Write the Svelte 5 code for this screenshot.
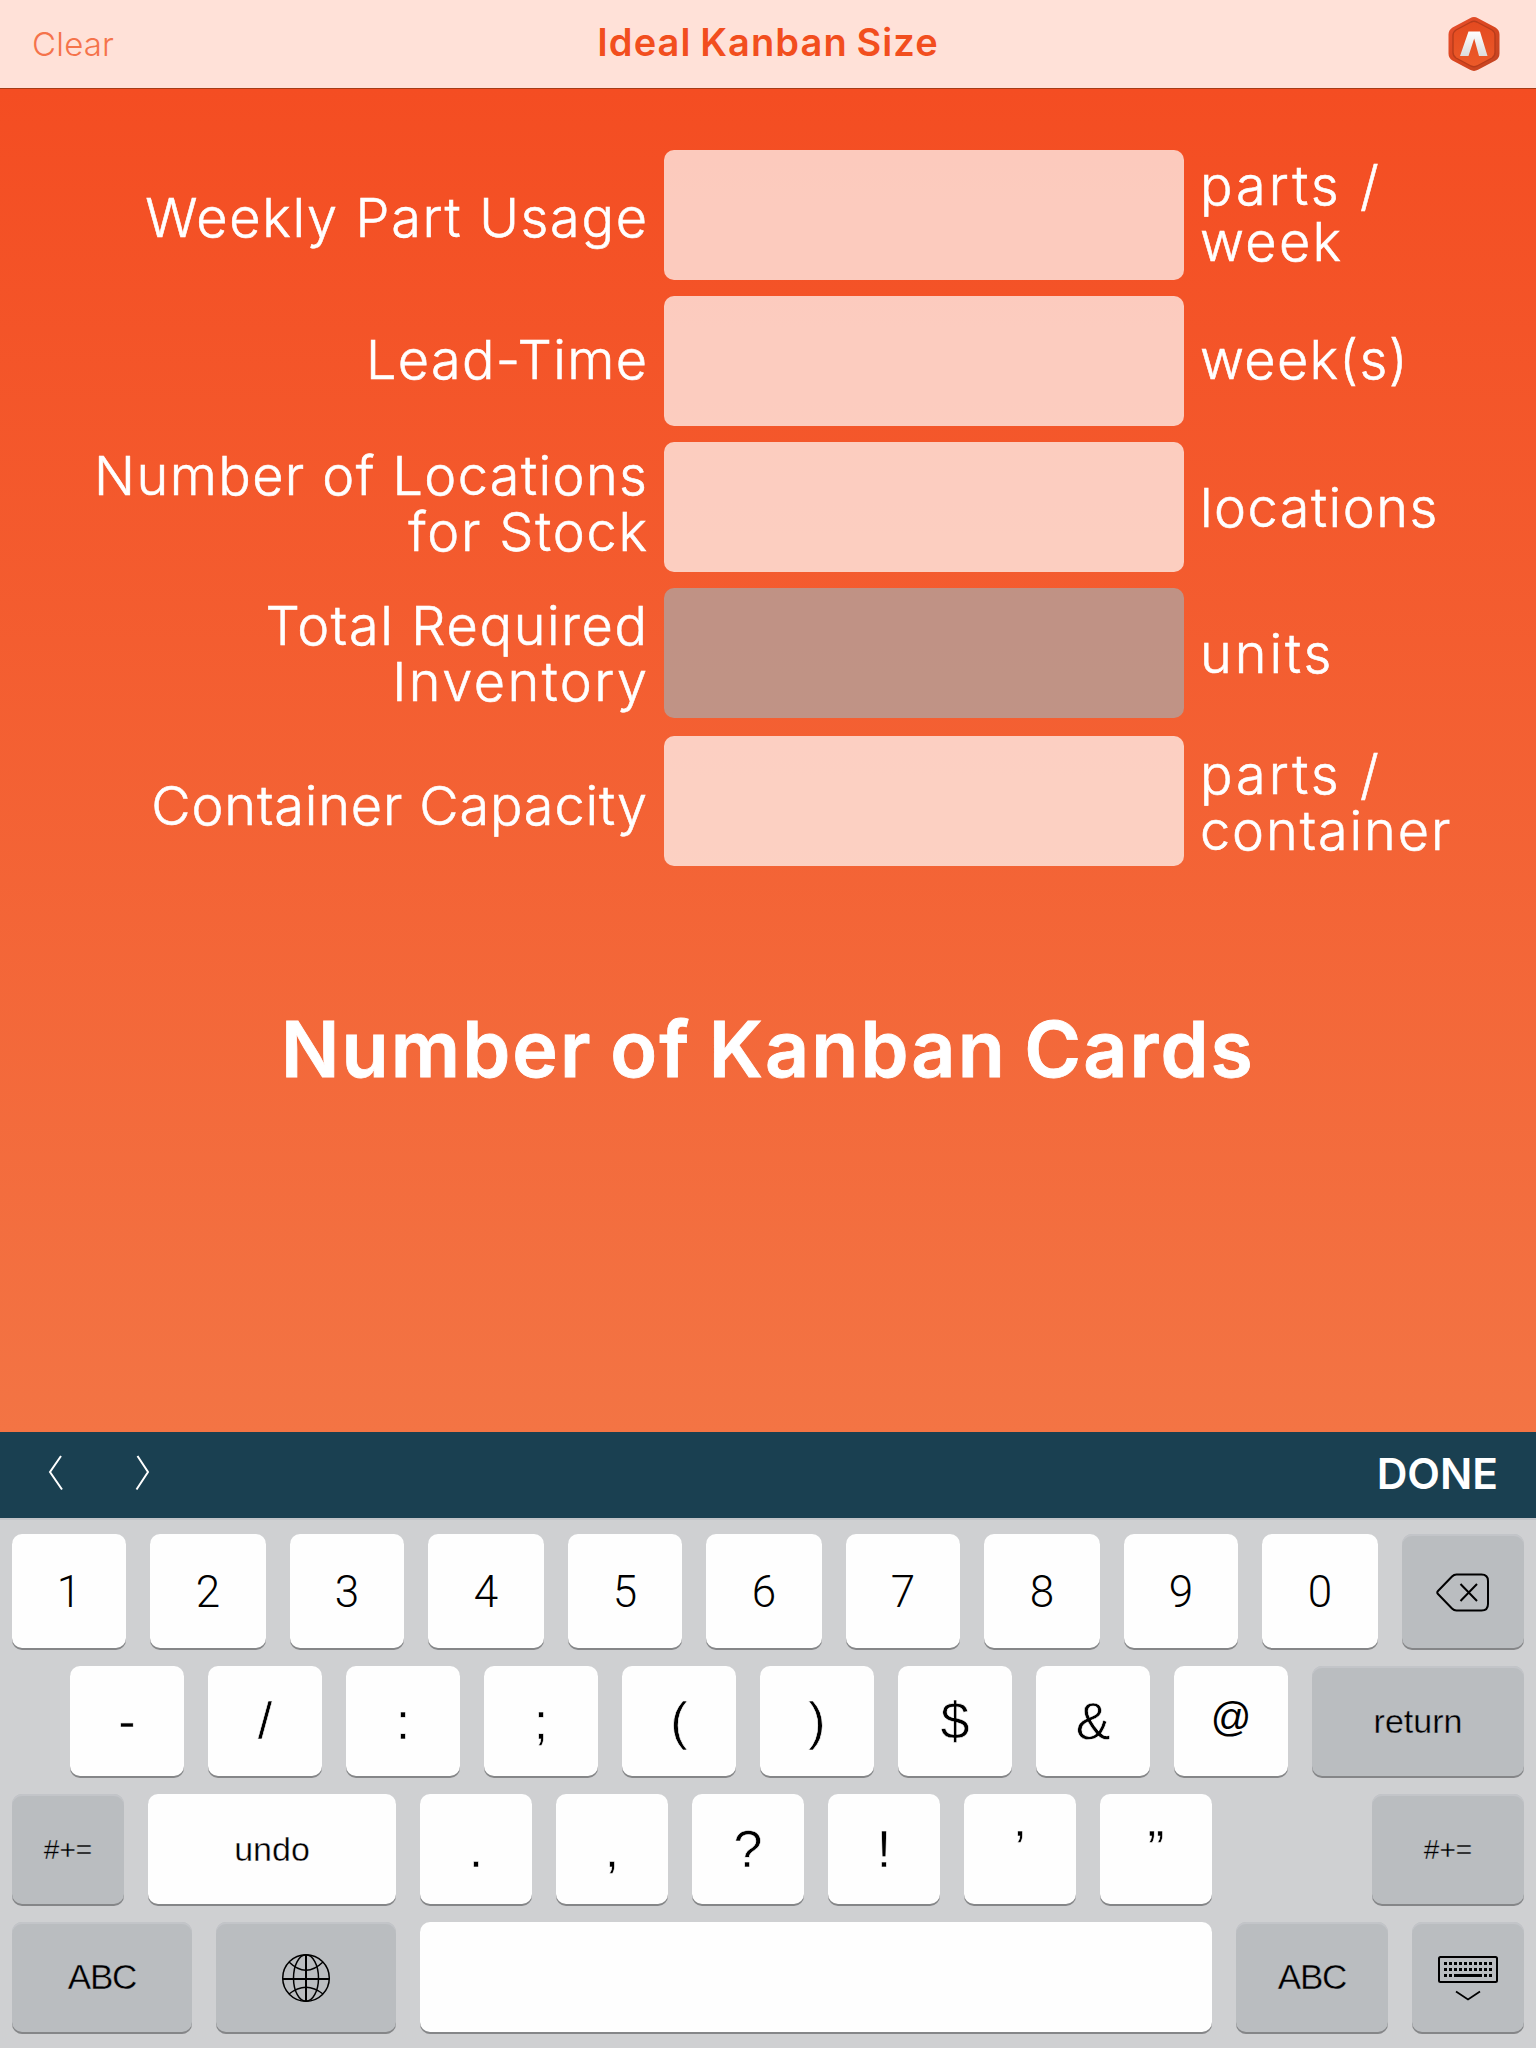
<script>
  // Each label line carries its own tracking; shift nudges the text block within its row.
  const fields = [
    { label: [['Weekly Part Usage', 1.69]], labelShift: 5, unit: [['parts /', 3.07], ['week', 2.29]], unitShift: -3 },
    { label: [['Lead-Time', 1.35]], labelShift: -3, unit: [['week(s)', 1.3]], unitShift: -3 },
    { label: [['Number of Locations', 1.42], ['for Stock', 1.8]], labelShift: -7, unit: [['locations', 1.5]], unitShift: 1 },
    { label: [['Total Required', 1.65], ['Inventory', 2.46]], labelShift: 1, unit: [['units', 2.95]], unitShift: 1, readonly: true },
    { label: [['Container Capacity', 0.85]], labelShift: 9, unit: [['parts /', 3.07], ['container', 1.9]], unitShift: 3 }
  ];

  // w is the key width in pixels; before is extra space ahead of the key.
  const rows = [
    {
      kind: 'digits',
      keys: [
        { t: '1', w: 114 }, { t: '2', w: 116 }, { t: '3', w: 114 }, { t: '4', w: 116 }, { t: '5', w: 114 },
        { t: '6', w: 116 }, { t: '7', w: 114 }, { t: '8', w: 116 }, { t: '9', w: 114 }, { t: '0', w: 116 },
        { icon: 'delete', w: 122, dark: true }
      ]
    },
    {
      kind: 'symbols',
      keys: [
        { t: '-', w: 114, before: 58 }, { t: '/', w: 114 }, { t: ':', w: 114 }, { t: ';', w: 114 }, { t: '(', w: 114 },
        { t: ')', w: 114 }, { t: '$', w: 114 }, { t: '&', w: 114 }, { t: '@', w: 114, size: 'at' },
        { t: 'return', w: 212, dark: true, size: 'word' }
      ]
    },
    {
      kind: 'symbols',
      keys: [
        { t: '#+=', w: 112, dark: true, size: 'small' }, { t: 'undo', w: 248, size: 'word' },
        { t: '.', w: 112 }, { t: ',', w: 112 }, { t: '?', w: 112 }, { t: '!', w: 112 }, { t: '’', w: 112 }, { t: '”', w: 112 },
        { t: '#+=', w: 152, before: 136, dark: true, size: 'small' }
      ]
    },
    {
      kind: 'symbols',
      keys: [
        { t: 'ABC', w: 180, dark: true, size: 'abc' }, { icon: 'globe', w: 180, dark: true }, { t: '', w: 792 },
        { t: 'ABC', w: 152, dark: true, size: 'abc' }, { icon: 'keyboard', w: 112, dark: true }
      ]
    }
  ];
  const cols = [0, 1, 2, 3, 4, 5, 6, 7, 8, 9];
</script>

<div class="screen">
  <header>
    <span class="clear">Clear</span>
    <h1>Ideal Kanban Size</h1>
    <svg class="logo" width="52" height="56" viewBox="0 0 52 56">
      <defs>
        <linearGradient id="rim" x1="0" y1="0" x2="1" y2="1">
          <stop offset="0" stop-color="#e8502f" />
          <stop offset=".5" stop-color="#d9461f" />
          <stop offset="1" stop-color="#bf4524" />
        </linearGradient>
        <linearGradient id="face" x1="0" y1="0" x2="0" y2="1">
          <stop offset="0" stop-color="#e44a20" />
          <stop offset="1" stop-color="#ec5a29" />
        </linearGradient>
        <linearGradient id="mark" x1="0" y1="0" x2="0" y2="1">
          <stop offset="0" stop-color="#ffffff" />
          <stop offset="1" stop-color="#dcdcdc" />
        </linearGradient>
      </defs>
      <path d="M22 2.2Q26 0 30 2.2L47.500 11.500Q51.500 14 51.500 18.500V37.500Q51.500 42 47.500 44.500L30 53.800Q26 56 22 53.800L4.500 44.500Q.5 42 .5 37.500V18.500Q.5 14 4.500 11.500Z" fill="url(#rim)" />
      <path d="M23 6Q26 4.500 29 6L44 14Q47 16 47 19.500V36.500Q47 40 44 42L29 50Q26 51.500 23 50L8 42Q5 40 5 36.500V19.500Q5 16 8 14Z" fill="url(#face)" stroke="#b83c1b" stroke-width="1.400" />
      <path d="M20.500 15.500H32L39.500 40H31L26.200 22.500L20.500 40H12Z" fill="url(#mark)" />
    </svg>
  </header>

  <main>
    <div class="form">
      {#each fields as f}
        <div class="row">
          <label class="label" style:margin-top="{f.labelShift}px">
            {#each f.label as [text, ls]}
              <span style:letter-spacing="{ls}px" style:margin-right="{1 - ls}px">{text}</span>
            {/each}
          </label>
          <div class="field" class:readonly={f.readonly}></div>
          <div class="unit" style:margin-top="{f.unitShift}px">
            {#each f.unit as [text, ls]}
              <span style:letter-spacing="{ls}px">{text}</span>
            {/each}
          </div>
        </div>
      {/each}
    </div>
    <h2>Number of Kanban Cards</h2>
  </main>

  <div class="toolbar">
    <svg width="120" height="36" viewBox="0 0 120 36" fill="none" stroke="#fff" stroke-width="2">
      <path d="M13 1L2 17L14 34.500M89.500 1L100 17L88.500 34.500" />
    </svg>
    <span class="done">DONE</span>
  </div>

  <div class="keyboard">
    {#each rows as r}
      <div class="keys {r.kind}">
        {#each r.keys as k}
          <div class="key {k.size ?? ''}" class:dark={k.dark} style:width="{k.w}px" style:margin-left="{k.before ?? 0}px">
            {#if k.icon === 'delete'}
              <svg class="delete" width="54" height="40" viewBox="0 0 54 40" fill="none" stroke="#000" stroke-width="2">
                <path d="M20.500 1.500H45.500Q52 1.500 52 8V31Q52 37.500 45.500 37.500H20.500Q18 37.500 16 35.500L2 21Q.5 19.500 2 18L16 3.500Q18 1.500 20.500 1.500ZM24.500 11L41 28M41 11L24.500 28" />
              </svg>
            {:else if k.icon === 'globe'}
              <svg class="globe" width="50" height="50" viewBox="0 0 50 50" fill="none" stroke="#000" stroke-width="1.500">
                <circle cx="25" cy="25" r="23.300" />
                <ellipse cx="25" cy="25" rx="12.500" ry="23.300" />
                <path d="M8 9Q25 25.500 42 9M8 41Q25 27.500 42 41" />
                <path d="M25 1.500V48.500M1.500 26H48.500" stroke-width="2" />
              </svg>
            {:else if k.icon === 'keyboard'}
              <svg class="kb" width="60" height="46" viewBox="0 0 60 46">
                <rect x="1" y="1" width="58" height="25" rx="1.500" fill="none" stroke="#000" stroke-width="2" />
                {#each cols as c}
                  <rect x={6 + c * 5} y="6" width="3" height="3" />
                  <rect x={6 + c * 5} y="12" width="3" height="3" />
                {/each}
                <path d="M6 18h3v3h-3zM11 18h3v3h-3zM16 18h28v3h-28zM46 18h3v3h-3zM51 18h3v3h-3z" />
                <path d="M18 35.500L30 43.500L42 35.500" fill="none" stroke="#000" stroke-width="1.800" />
              </svg>
            {:else}
              {k.t}
            {/if}
          </div>
        {/each}
      </div>
    {/each}
  </div>
</div>

<style>
  :global(body) { margin: 0; }
  .screen {
    width: 1536px;
    height: 2048px;
    display: flex;
    flex-direction: column;
    overflow: hidden;
    font-family: Inter, 'Liberation Sans', sans-serif;
  }
  header {
    box-sizing: border-box;
    height: 89px;
    padding: 0 36px 0 32px;
    display: grid;
    grid-template-columns: 1fr auto 1fr;
    align-items: center;
    background: #ffe1d8;
    border-bottom: 1px solid #a63b16;
    color: #f24e1e;
  }
  .clear { font-size: 33px; font-weight: 300; line-height: 40px; margin-bottom: 1px; letter-spacing: .2px; color: #f5734b; }
  h1 { margin: 0 0 5px 4px; font-size: 38px; font-weight: 600; line-height: 46px; letter-spacing: 1.1px; word-spacing: -2px; }
  .logo { justify-self: end; }
  main {
    height: 1343px;
    background: linear-gradient(#f44d22, #f37444);
    color: #fff;
  }
  .form { padding-top: 61px; display: flex; flex-direction: column; gap: 16px; }
  .row {
    height: 130px;
    display: grid;
    grid-template-columns: 648px 520px 1fr;
    column-gap: 16px;
    align-items: center;
  }
  .row:last-child { margin-top: 2px; }
  .label, .unit {
    font-size: 54px;
    font-weight: 300;
    line-height: 56px;
    white-space: nowrap;
    -webkit-text-stroke: .6px #fff;
  }
  .label { text-align: right; }
  .label span, .unit span { display: block; }
  .field { height: 130px; border-radius: 10px; background: rgba(255, 255, 255, .7); }
  .readonly { background: rgba(170, 170, 170, .7); }
  h2 {
    margin: 133px 0 0;
    font-size: 77px;
    font-weight: 600;
    line-height: 100px;
    letter-spacing: 2.1px;
    word-spacing: -4px;
    text-align: center;
    -webkit-text-stroke: .8px #fff;
  }
  .toolbar {
    height: 86px;
    padding: 0 38px 0 48px;
    display: flex;
    align-items: center;
    justify-content: space-between;
    background: #1a4051;
    color: #fff;
  }
  .toolbar svg { margin-bottom: 4px; }
  .done { font-size: 42.5px; font-weight: 600; line-height: 50px; margin-bottom: 3px; }
  .keyboard {
    box-sizing: border-box;
    height: 530px;
    padding: 14px 12px 0;
    display: flex;
    flex-direction: column;
    gap: 18px;
    background: #cfd0d2;
    border-top: 2px solid #c2c4c8;
    font-family: 'Liberation Sans', Arial, sans-serif;
    color: #000;
  }
  .keys { display: flex; gap: 24px; height: 110px; }
  .digits { height: 114px; }
  .key {
    box-sizing: border-box;
    flex: none;
    display: flex;
    align-items: center;
    justify-content: center;
    border-radius: 10px;
    background: #fefefe;
    box-shadow: 0 2px 0 #858688;
    font-size: 52px;
    line-height: 60px;
    -webkit-text-stroke: .6px #fefefe;
  }
  .digits .key {
    font-family: Roboto, 'Liberation Sans', sans-serif;
    font-size: 44px;
    font-weight: 300;
    padding-top: 1px;
    -webkit-text-stroke-width: 0;
  }
  .key.dark {
    background: #babdc0;
    box-shadow: 0 2px 0 #858688, inset 0 2px 0 #c3c5c9;
    -webkit-text-stroke-color: #babdc0;
  }
  .key.at { font-size: 40px; padding-bottom: 8px; -webkit-text-stroke-width: 0; }
  .key.word { font-size: 34px; -webkit-text-stroke-width: .4px; }
  .key.small { font-size: 28px; padding-top: 2px; -webkit-text-stroke-width: .3px; }
  .key.abc { font-size: 35px; letter-spacing: -1.2px; -webkit-text-stroke-width: .4px; }
  .delete { margin-top: 3px; }
  .globe { margin-top: 2px; }
  .kb { margin-top: 4px; }
</style>
